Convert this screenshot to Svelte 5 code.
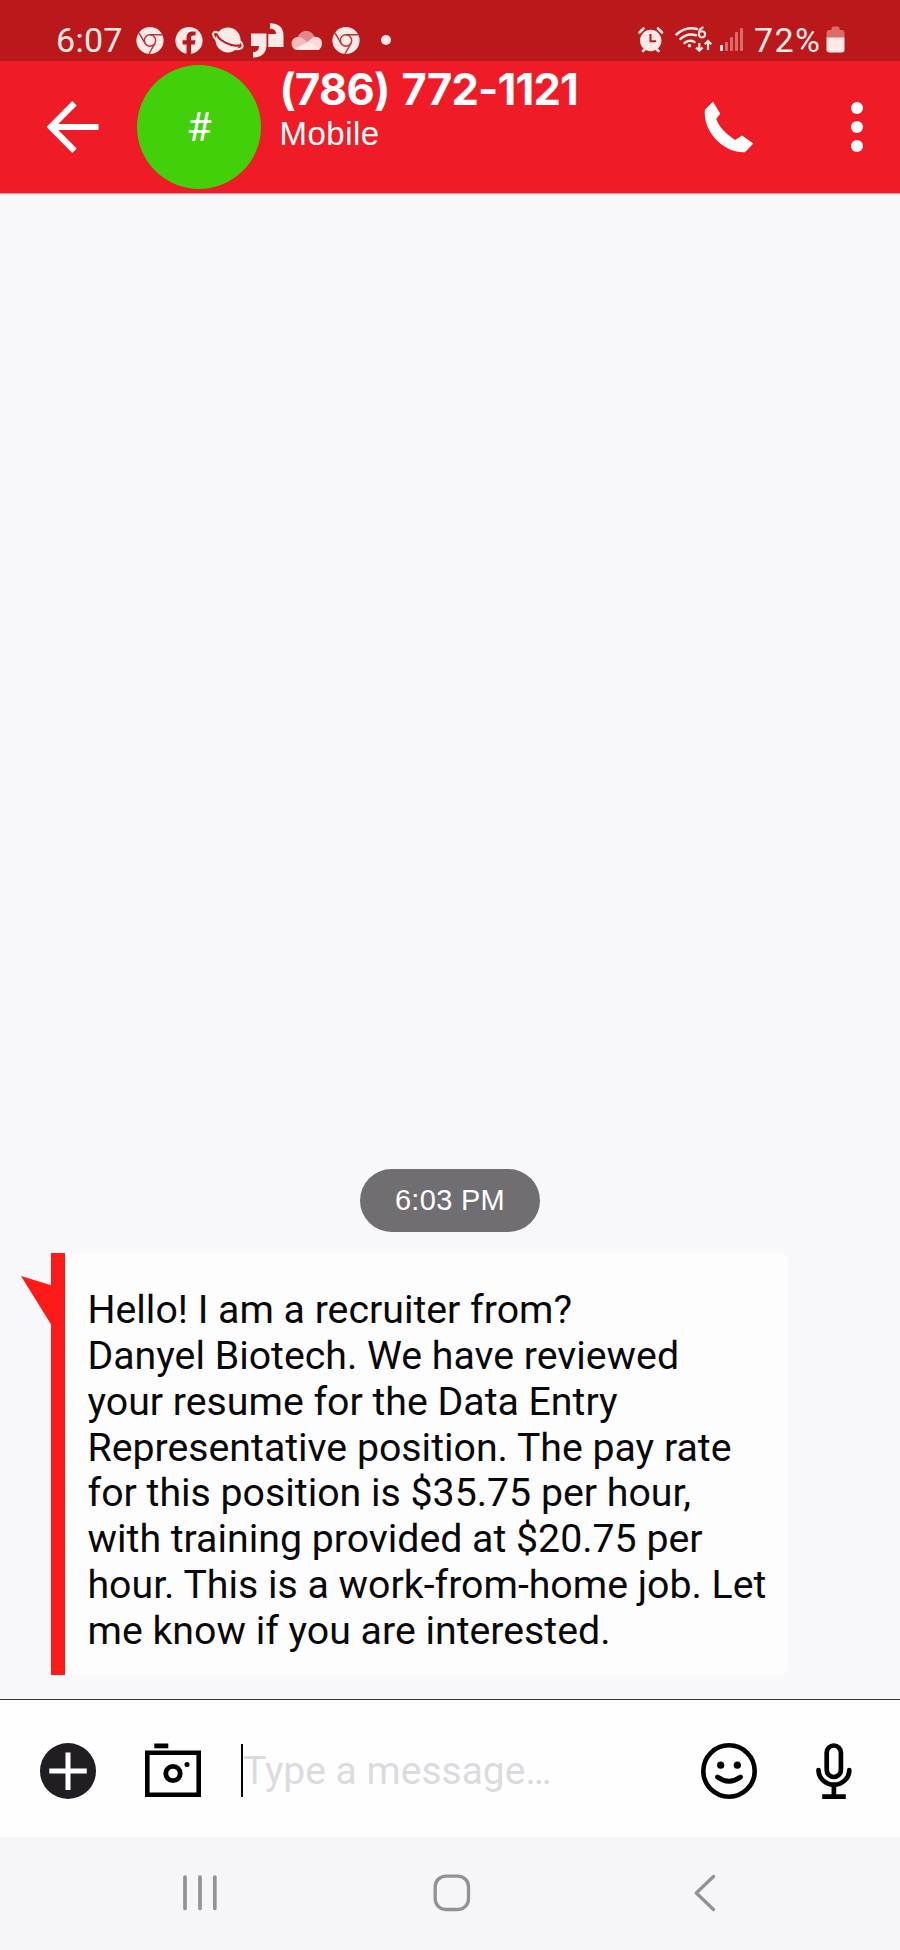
<script lang="ts">
  const contact = { number: '(786) 772-1121', label: 'Mobile' };
  const signalBars = [6, 9, 14, 19, 23];

  const message = [
    'Hello! I am a recruiter from?',
    'Danyel Biotech. We have reviewed',
    'your resume for the Data Entry',
    'Representative position. The pay rate',
    'for this position is $35.75 per hour,',
    'with training provided at $20.75 per',
    'hour. This is a work-from-home job. Let',
    'me know if you are interested.'
  ];
</script>

{#snippet chrome()}
  <svg width="32" height="36" viewBox="0 0 32 36">
    <circle cx="16" cy="18.5" r="13.6" fill="#fdeae7" />
    <g fill="none" stroke="#b4383a" stroke-width="1.5">
      <circle cx="16" cy="18.5" r="5.7" />
      <path d="M16 12.8h12.5M11.1 21.3L4.8 10.6M20.9 21.4l-6 10.6" />
    </g>
  </svg>
{/snippet}

<div class="screen">
  <div class="status">
    <span class="clock">6:07</span>
    <div class="notifications">
      {@render chrome()}
      <svg width="32" height="36" viewBox="0 0 32 36">
        <circle cx="16" cy="18.5" r="13.6" fill="#fdeae7" />
        <path
          d="M13.5 33V22.5H9.6v-4.3h3.9v-2.6c0-4.2 2.3-6.2 6.2-6.2 1.2 0 2.2.1 2.9.3v3.8h-2.2c-1.8 0-2.3.9-2.3 2.3v2.4h4.4l-.8 4.3h-3.6V33z"
          fill="#ba181c"
        />
      </svg>
      <svg width="32" height="36" viewBox="0 0 32 36">
        <circle cx="16" cy="18" r="12.5" fill="#fdeae7" />
        <path
          d="M6 10.5C1 8.5-.4 12 3 16.5c5 6.5 17 11.5 24 10.5 5-.7 4.5-4.5 1-8"
          fill="none"
          stroke="#fdeae7"
          stroke-width="2"
        />
        <path d="M4.8 12C6 18 19 25.5 27.5 23.3" fill="none" stroke="#ba181c" stroke-width="2" />
      </svg>
      <svg width="33" height="36" viewBox="0 0 33 36" fill="#fdeae7">
        <path d="M0 11.5h15.5v11.5c0 8-5 12.5-13.5 12.5v-5.5c4 0 6-2 6-6H0z" />
        <path d="M17.3 25h15.2V13.5c0-8-5-12.2-13.5-12.2v5.4c4 0 6 1.7 6 5.3h-7.7z" />
      </svg>
      <svg width="32" height="36" viewBox="0 0 32 36">
        <path d="M6.5 16.5C8 7 20.5 6.5 23.3 14.5l-7 5z" fill="#e3888a" />
        <path d="M6.5 15c-7.5 1-7.5 10-2.5 12.5l12.5-7.5c-3-3-6-5-10-5z" fill="#f2bcbc" />
        <path d="M16 20l6-5c5.5-1.5 9 2 9 6.5 0 4-2.5 6.5-5.5 6.5z" fill="#fdd9d8" />
        <path d="M3.5 27L17 19.5l12 7.5c-1.2.9-2.2 1-3.5 1H7c-1.5 0-2.5-.3-3.5-1z" fill="#fdeae7" />
      </svg>
      {@render chrome()}
      <span class="more-dot"></span>
    </div>

    <div class="system">
      <svg class="alarm" width="26" height="28" viewBox="0 0 26 28">
        <g stroke="#fdeae7" stroke-width="2.6" stroke-linecap="round" fill="none">
          <path d="M1.5 6.5l4-4M24 6.5l-4-4M5 25l3-3M20.5 25l-3-3" />
        </g>
        <circle cx="12.7" cy="14.5" r="10.7" fill="#fdeae7" />
        <path d="M12.5 8v7.3h5.7" fill="none" stroke="#ba181c" stroke-width="2" />
      </svg>
      <svg class="wifi" width="38" height="30" viewBox="0 0 38 30" fill="none" stroke="#fdeae7">
        <path d="M1.5 9.5Q10.5 1 22 4M5.5 14Q12 7.8 21 10.2M9.5 18Q14 14 19.5 17" stroke-width="2.5" stroke-linecap="round" />
        <circle cx="14.5" cy="20.8" r="1.8" fill="#fdeae7" stroke="none" />
        <circle cx="27" cy="9.3" r="3.1" stroke-width="2" />
        <path d="M28.5 2.3Q24 3.5 23.9 9" stroke-width="2" />
        <path d="M24.3 18v7M21 22.5l3.3 3.3 3.3-3.3M33 25v-8M29.7 19.3L33 16l3.3 3.3" stroke-width="2.2" />
      </svg>
      <div class="signal">
        {#each signalBars as height, i}
          <i class:on={i === 0} style="height: {height}px"></i>
        {/each}
      </div>
      <span class="percent">72%</span>
      <svg class="battery" width="19" height="28" viewBox="0 0 19 28">
        <path d="M.5 12V7q0-3 3-3h2V2.5q0-2 2-2h4q2 0 2 2V4h2q3 0 3 3v5z" fill="#dc6c6c" />
        <path d="M.5 11.5h18v12q0 3-3 3h-12q-3 0-3-3z" fill="#fdeae7" />
      </svg>
    </div>
  </div>

  <header>
    <svg class="back" width="52" height="52" viewBox="0 0 52 52" fill="none" stroke="#fff" stroke-width="6.2">
      <path d="M27.5 2.3L3.8 26l23.7 23.7M4 26h47.5" />
    </svg>
    <div class="avatar">#</div>
    <div class="contact">
      <h1>{contact.number}</h1>
      <p>{contact.label}</p>
    </div>
    <svg class="call" width="50" height="52" viewBox="0 0 50 52">
      <path
        d="M9 .8L1 8.5C-1.8 28.5 18 52.5 41 51.2L49.3 42.5 38 34.5 32 38.5Q31 39.2 29.5 38 16.5 29 12.3 18.5 12.5 17 16.3 12.8z"
        fill="#fff"
      />
    </svg>
    <div class="menu"><i></i><i></i><i></i></div>
  </header>

  <main>
    <time>6:03 PM</time>
    <div class="bubble">
      <svg class="tail" width="32" height="52" viewBox="0 0 32 52">
        <path d="M0 0l31 9.5H32V51.5L31 50z" fill="#ff1a1a" />
      </svg>
      <p>
        {#each message as line}
          {line}<br />
        {/each}
      </p>
    </div>
  </main>

  <div class="compose">
    <svg class="add" width="56" height="56" viewBox="0 0 56 56">
      <circle cx="28" cy="28" r="28" fill="#201e22" />
      <path d="M28 9.5v37.5M9.3 28h37.5" stroke="#fff" stroke-width="5" />
    </svg>
    <svg class="camera" width="56" height="56" viewBox="0 0 56 56">
      <path d="M9.3.5h14v4.8h-14z" />
      <path d="M2.3 9.8h51.4v42H2.3z" fill="none" stroke="#000" stroke-width="4.6" />
      <circle cx="28" cy="30.5" r="7.2" fill="none" stroke="#000" stroke-width="4.8" />
      <circle cx="42" cy="21.5" r="2.5" />
    </svg>
    <div class="input">Type a message…</div>
    <svg class="emoji" width="56" height="56" viewBox="0 0 56 56" fill="none" stroke="#000">
      <circle cx="28" cy="28" r="25.7" stroke-width="4.6" />
      <circle cx="19.7" cy="22.2" r="3.6" fill="#000" stroke="none" />
      <circle cx="36.3" cy="22.2" r="3.6" fill="#000" stroke="none" />
      <path d="M16.5 34Q28 42.5 39.5 34" stroke-width="4.8" stroke-linecap="round" />
    </svg>
    <svg class="mic" width="36" height="56" viewBox="0 0 36 56" fill="none" stroke="#000" stroke-width="4.7">
      <rect x="10.7" y="2.5" width="14.2" height="31.5" rx="7.1" />
      <path d="M2.5 27a15.4 14.7 0 0 0 30.8 0" stroke-linecap="round" />
      <path d="M17.9 41v12M6.2 53.7h23.6" />
    </svg>
  </div>

  <nav>
    <svg width="34" height="38" viewBox="0 0 34 38" fill="none" stroke="#929195" stroke-width="3.7" stroke-linecap="round">
      <path d="M2 3v31.5M17 3v31.5M31.8 3v31.5" />
    </svg>
    <svg class="home" width="38" height="38" viewBox="0 0 38 38" fill="none" stroke="#929195" stroke-width="3.3">
      <rect x="2.2" y="2.2" width="33.3" height="33.3" rx="10.5" />
    </svg>
    <svg width="22" height="38" viewBox="0 0 22 38" fill="none" stroke="#929195" stroke-width="3.3" stroke-linecap="round">
      <path d="M19.5 2.5L2.3 19l17.2 16.5" stroke-linejoin="round" />
    </svg>
  </nav>
</div>

<style>
  :global(body) {
    margin: 0;
  }

  svg {
    display: block;
    flex: none;
  }

  .screen {
    width: 900px;
    height: 1950px;
    display: flex;
    flex-direction: column;
    background: #f8f7fa;
    font-family: 'Liberation Sans', Arial, sans-serif;
    overflow: hidden;
  }

  .status {
    height: 61px;
    box-sizing: border-box;
    padding: 18px 55px 0 56px;
    display: flex;
    align-items: center;
    background: #bb181b;
    color: #fdeae7;
    font-family: Roboto, sans-serif;
    font-size: 34px;
    line-height: 36px;
  }

  .clock {
    width: 77.5px;
    letter-spacing: 0.3px;
  }

  .notifications {
    display: flex;
    align-items: center;
    gap: 7px;
  }

  .more-dot {
    width: 10px;
    height: 10px;
    margin-left: 12px;
    border-radius: 50%;
    background: #fdeae7;
  }

  .system {
    display: flex;
    align-items: center;
    margin-left: auto;
  }

  .wifi {
    margin-left: 11px;
  }

  .signal {
    display: flex;
    align-items: flex-end;
    gap: 2px;
    height: 23px;
    margin: 0 11px 0 7px;
  }

  .signal i {
    width: 3px;
    border-radius: 1px;
    background: #dc6c6c;
  }

  .signal i.on {
    background: #fdeae7;
  }

  .percent {
    width: 72px;
    letter-spacing: 1.4px;
  }

  header {
    height: 133px;
    box-sizing: border-box;
    border-bottom: 1px solid #f3949b;
    padding: 0 37px 0 47px;
    display: flex;
    align-items: center;
    background: #ef1b26;
    color: #fff;
  }

  .avatar {
    width: 124px;
    height: 124px;
    margin-left: 38px;
    border-radius: 50%;
    background: #41d00a;
    font-family: Roboto, sans-serif;
    font-size: 41px;
    line-height: 124px;
    text-align: center;
  }

  .contact {
    align-self: flex-start;
    margin: 3px auto 0 18.5px;
  }

  h1 {
    margin: 0;
    font-family: Inter, 'Liberation Sans', sans-serif;
    font-size: 43.5px;
    font-weight: 700;
    letter-spacing: -0.8px;
    word-spacing: 2.5px;
    line-height: 50px;
    white-space: nowrap;
  }

  .contact p {
    margin: 1px 0 0;
    font-size: 33px;
    letter-spacing: 0.5px;
    line-height: 38px;
  }

  .call {
    margin-right: 97px;
  }

  .menu {
    display: flex;
    flex-direction: column;
    gap: 7px;
  }

  .menu i {
    width: 12px;
    height: 12px;
    border-radius: 50%;
    background: #fff;
  }

  main {
    flex: 1;
    display: flex;
    flex-direction: column;
    justify-content: flex-end;
    align-items: flex-start;
    padding: 0 0 24px 51px;
  }

  time {
    align-self: center;
    width: 180px;
    margin: 0 51px 21px 0;
    border-radius: 32px;
    background: #706e71;
    color: #fff;
    font-size: 29px;
    letter-spacing: 0.3px;
    line-height: 63px;
    text-align: center;
  }

  .bubble {
    position: relative;
    width: 737px;
    height: 422px;
    box-sizing: border-box;
    border-left: 14px solid #ff1a1a;
    border-radius: 0 8px 8px 0;
    padding: 35px 0 0 22.5px;
    background: #fefdfe;
  }

  .tail {
    position: absolute;
    left: -44px;
    top: 23px;
  }

  .bubble p {
    margin: 0;
    font-family: Roboto, sans-serif;
    font-size: 39.25px;
    line-height: 45.86px;
    color: #09080b;
    white-space: nowrap;
  }

  .compose {
    height: 138px;
    box-sizing: border-box;
    border-top: 1px solid #343236;
    padding: 4px 48px 0 40px;
    display: flex;
    align-items: center;
    background: #fefefe;
  }

  .camera {
    margin-left: 49px;
  }

  .input {
    flex: 1;
    height: 53px;
    margin-left: 40px;
    border-left: 2px solid #000;
    font-family: Roboto, sans-serif;
    font-size: 39px;
    line-height: 54px;
    color: #dddadf;
  }

  .mic {
    margin-left: 59px;
  }

  nav {
    height: 113px;
    box-sizing: border-box;
    padding: 0 183px 2px;
    display: flex;
    align-items: center;
    background: #f6f5f9;
  }

  .home {
    margin: 0 223px 0 216px;
  }
</style>
